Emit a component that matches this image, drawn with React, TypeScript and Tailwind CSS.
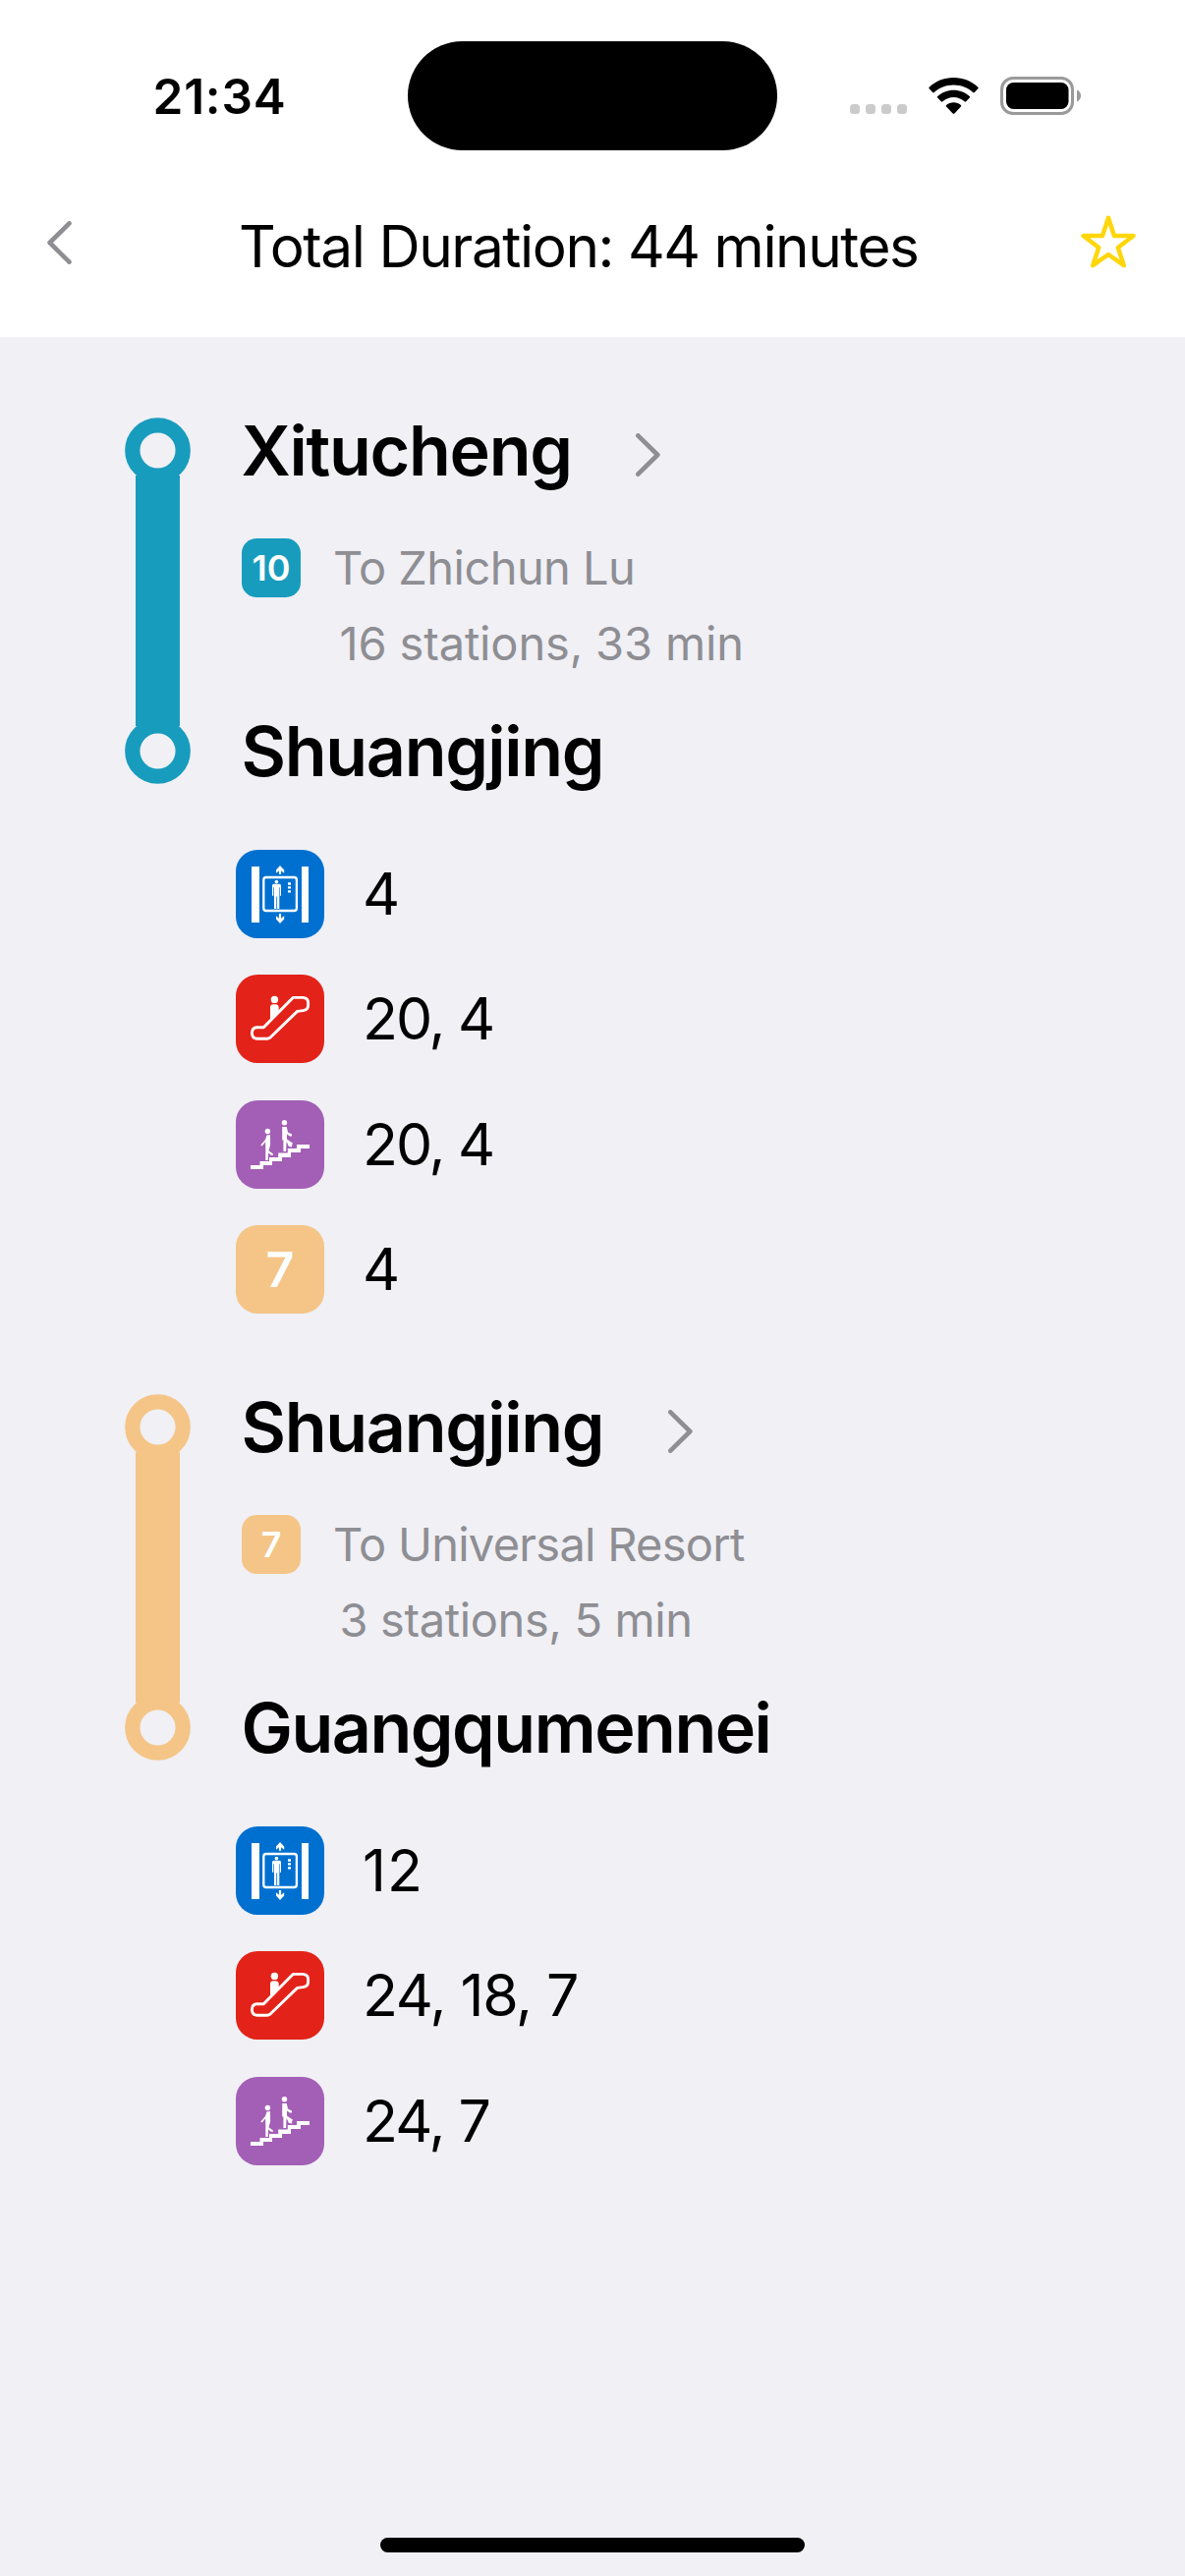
import type { ReactNode } from "react";

type Facility = { kind: "elevator" | "escalator" | "stairs" | "line"; exits: string; tracking: string };

type Leg = {
  line: string;
  from: string;
  fromTracking: string;
  to: string;
  toTracking: string;
  direction: string;
  directionTracking: string;
  summary: string;
  summaryTracking: string;
  text: string;
  bg: string;
  facilities: Facility[];
};

const legs: Leg[] = [
  {
    line: "10",
    from: "Xitucheng",
    fromTracking: "tracking-[-1.3px]",
    to: "Shuangjing",
    toTracking: "tracking-[-1.3px]",
    direction: "To Zhichun Lu",
    directionTracking: "tracking-[-0.57px]",
    summary: "16 stations, 33 min",
    summaryTracking: "tracking-[-0.15px]",
    text: "text-[#189CBE]",
    bg: "bg-[#189CBE]",
    facilities: [
      { kind: "elevator", exits: "4", tracking: "tracking-normal" },
      { kind: "escalator", exits: "20, 4", tracking: "tracking-[-2.07px]" },
      { kind: "stairs", exits: "20, 4", tracking: "tracking-[-2.07px]" },
      { kind: "line", exits: "4", tracking: "tracking-normal" },
    ],
  },
  {
    line: "7",
    from: "Shuangjing",
    fromTracking: "tracking-[-1.3px]",
    to: "Guangqumennei",
    toTracking: "tracking-[-1.5px]",
    direction: "To Universal Resort",
    directionTracking: "tracking-[-0.72px]",
    summary: "3 stations, 5 min",
    summaryTracking: "tracking-[-0.37px]",
    text: "text-[#F4C587]",
    bg: "bg-[#F4C587]",
    facilities: [
      { kind: "elevator", exits: "12", tracking: "tracking-[1px]" },
      { kind: "escalator", exits: "24, 18, 7", tracking: "tracking-[-1.32px]" },
      { kind: "stairs", exits: "24, 7", tracking: "tracking-[-1.8px]" },
    ],
  },
];

function ElevatorIcon() {
  return (
    <svg viewBox="0 0 90 90" className="size-[90px]" fill="#fff">
      <rect x="16" y="17" width="8" height="57" />
      <rect x="67" y="17" width="7" height="57" />
      <rect x="28.3" y="28" width="33.6" height="34" rx="2.6" fill="none" stroke="#fff" strokeWidth="2.3" />
      <path d="M45 16l4.2 4.4v3.4l-3.1-2.6V24.8h-2.2V21.2L41 23.8v-3.4z" />
      <path d="M45 75l4.2-4.4v-3.4l-3.1 2.6V65h-2.2v4.8L41 67.2v3.4z" />
      <circle cx="41.4" cy="32.6" r="1.8" />
      <path d="M38.6 34.8h5.8q1.6 0 1.6 1.7v10.3h-1.1v-8.6h-.6V60h-2.2V47.5h-.8V60H39V38.2h-.7v8.6H37V36.5q0-1.7 1.600-1.700z" />
      <path d="M53 33.300h3v2.400h-3zM53 37.200h3v2.400h-3zM53 41.200h3v2.400h-3z" />
    </svg>
  );
}

function EscalatorIcon() {
  return (
    <svg viewBox="0 0 90 90" className="size-[90px]" fill="#fff">
      <circle cx="39.4" cy="25.4" r="3.7" />
      <path d="M35 33.500q0-3.200 3.200-3.200h2.300q2.600 0 3.200 2.800v5.600L35 47.500z" />
      <path
        d="M58.200 23.400H68.500Q73.600 24 73.600 28.500V31Q73.600 36 68.500 36.600L62.600 37.400 34.800 64.200Q33.500 65.300 32 65.300H21.500Q16.400 64.800 16.400 59.500 16.400 54 21.500 53.700H28.300Z"
        fill="none"
        stroke="#fff"
        strokeWidth="2.9"
        strokeLinejoin="round"
      />
    </svg>
  );
}

function StairsIcon() {
  return (
    <svg viewBox="0 0 90 90" className="size-[90px]" fill="#fff">
      <path d="M15 66h9.500v-4h9.500v-4h9.200v-4.500h9.600V49h9.200v-4H75v4h-9v4h-10v5h-9v4H37v4h-9v4H15z" />
      <circle cx="32.400" cy="31.500" r="2.700" />
      <path d="M31.500 35.500L35 35l.1 10.500-1.600 5.700 4.400 3.300v1.300h-2L33 53.600l-.3 7.400h-2.400V50l-.1-7.700-3.500 4.200-1.400-1 4.700-5.600z" />
      <circle cx="49.500" cy="22.700" r="2.700" />
      <path d="M47.200 27h4.600l1.200 5.400 4 2v2.200h-2l-3-2v4.800l4.200 3 1.600.9-1.100 4.500-3.600-1.500.2-1.300-1.800-2.700-.4 9.700h-2.700V40.500h-1.200z" />
    </svg>
  );
}

function Tile({ className, children }: { className: string; children: ReactNode }) {
  return (
    <div
      className={
        "flex size-[90px] shrink-0 items-center justify-center rounded-[22px] text-[50px] font-semibold leading-[90px] text-white " +
        className
      }
    >
      {children}
    </div>
  );
}

function FacilityRow({ item }: { item: Facility }) {
  return (
    <li className="flex h-[90px] items-center">
      {item.kind === "elevator" && <Tile className="bg-[#0070D0]"><ElevatorIcon /></Tile>}
      {item.kind === "escalator" && <Tile className="bg-[#E32319]"><EscalatorIcon /></Tile>}
      {item.kind === "stairs" && <Tile className="bg-[#A35FB5]"><StairsIcon /></Tile>}
      {item.kind === "line" && <Tile className="bg-[#F4C587]">7</Tile>}
      <span className={"ml-[39px] whitespace-nowrap text-[59px] leading-[90px] text-black " + item.tracking}>{item.exits}</span>
    </li>
  );
}

function Marker() {
  return (
    <svg viewBox="0 0 67 67" className="size-[67px] shrink-0">
      <circle cx="33.5" cy="33.5" r="25.700" fill="none" stroke="currentColor" strokeWidth="15.300" />
    </svg>
  );
}

function Chevron({ className }: { className: string }) {
  return (
    <svg viewBox="0 0 25 44" className={"h-[44px] w-[25px] shrink-0 text-[#8E8E93] " + className}>
      <path d="M2.300 2.300L22.300 22L2.300 41.700" fill="none" stroke="currentColor" strokeWidth="4.600" strokeLinecap="round" strokeLinejoin="round" />
    </svg>
  );
}

function LegCard({ leg }: { leg: Leg }) {
  return (
    <section>
      <div className="flex">
        <div className={"flex h-[373px] w-[67px] flex-col items-center " + leg.text}>
          <Marker />
          <div className={"-my-[8px] w-[45px] flex-1 " + leg.bg} />
          <Marker />
        </div>
        <div className="ml-[51.500px] flex flex-col">
          <div className="flex h-[67px] items-center">
            <h2 className={"whitespace-nowrap text-[70px] font-semibold leading-[67px] text-black " + leg.fromTracking}>{leg.from}</h2>
            <Chevron className="ml-[65.500px] mt-[9px]" />
          </div>
          <div className="ml-[0.500px] mt-[56px] flex h-[60px] items-center">
            <div className={"flex size-[60px] items-center justify-center rounded-[15px] text-[36px] font-semibold leading-[60px] text-white " + leg.bg}>
              {leg.line}
            </div>
            <span className={"ml-[33px] whitespace-nowrap text-[47px] leading-[60px] text-[#8E8E93] " + leg.directionTracking}>{leg.direction}</span>
          </div>
          <p className={"ml-[100px] mt-[16px] h-[62px] whitespace-nowrap text-[47px] leading-[62px] text-[#8E8E93] " + leg.summaryTracking}>{leg.summary}</p>
          <h2 className={"mt-[45px] h-[67px] whitespace-nowrap text-[70px] font-semibold leading-[67px] text-black " + leg.toTracking}>{leg.to}</h2>
        </div>
      </div>
      <ul className="ml-[113px] mt-[67px] flex flex-col gap-[37.4px]">
        {leg.facilities.map((f) => (
          <FacilityRow key={f.kind} item={f} />
        ))}
      </ul>
    </section>
  );
}

function StatusBar() {
  return (
    <div className="flex h-[153px] items-start">
      <div className="ml-[155.500px] mt-[73px] w-[259.500px] text-[49.500px] font-semibold leading-[50px] tracking-[0.8px] text-black">21:34</div>
      <div className="mt-[41.500px] h-[111px] w-[376px] rounded-full bg-black" />
      <div className="ml-[74px] mt-[106px] flex gap-[6px]">
        {[0, 1, 2, 3].map((i) => (
          <span key={i} className="h-[10px] w-[10px] rounded-[3.500px] bg-[#CBCBCB]" />
        ))}
      </div>
      <svg viewBox="0 0 51 37" className="ml-[22px] mt-[79px] h-[37px] w-[51px]" fill="#000">
        <path d="M25.500 0C35.300 0 44 3.700 50.300 9.700q.8.800 0 1.600l-3.500 3.600q-.8.800-1.600.1C40 10.200 33 7.500 25.500 7.500S11 10.200 5.800 15q-.8.700-1.600-.1L.7 11.300q-.8-.8 0-1.600C7 3.700 15.700 0 25.500 0z" />
        <path d="M25.500 12.700c6.300 0 12 2.400 16.300 6.300q.8.800 0 1.600l-3.600 3.600q-.8.800-1.600.1c-3-2.600-6.900-4.200-11.100-4.200s-8.100 1.600-11.100 4.200q-.8.700-1.600-.1l-3.600-3.600q-.8-.8 0-1.600c4.300-3.900 10-6.300 16.300-6.300z" />
        <path d="M25.500 25.300c2.800 0 5.400 1 7.400 2.700q.8.800 0 1.600l-6.500 6.800q-.9.800-1.800 0l-6.500-6.800q-.8-.8 0-1.600c2-1.700 4.600-2.700 7.400-2.700z" />
      </svg>
      <svg viewBox="0 0 82 39" className="ml-[22px] mt-[78px] h-[39px] w-[82px]">
        <rect x="1.500" y="1.500" width="72" height="36" rx="11.500" fill="none" stroke="#9A9A9A" strokeWidth="3" />
        <rect x="6" y="6" width="63.500" height="27" rx="7.500" fill="#000" />
        <path d="M78 13.500q4 1.800 4 6t-4 6z" fill="#9A9A9A" />
      </svg>
    </div>
  );
}

export default function App() {
  return (
    <div className="flex h-[2622px] w-[1206px] flex-col overflow-hidden bg-[#F0F0F5] font-['Inter',sans-serif]">
      <header className="h-[343px] shrink-0 bg-white">
        <StatusBar />
        <div className="flex h-[190px] items-start">
          <svg viewBox="0 0 25 44" className="ml-[47.500px] mt-[71.500px] h-[44px] w-[25px] shrink-0">
            <path d="M22.500 2.300L2.600 22L22.500 41.700" fill="none" stroke="#8E8E93" strokeWidth="4.600" strokeLinecap="round" strokeLinejoin="round" />
          </svg>
          <h1 className="ml-[170.500px] mt-[58px] w-[856px] whitespace-nowrap text-[58.500px] leading-[80px] tracking-[-1.450px] text-black">
            Total Duration: 44 minutes
          </h1>
          <svg viewBox="0 0 57 54" className="mt-[66px] h-[54px] w-[57px] shrink-0">
            <path
              d="M29 2.700L35 21L54.500 21L38.800 33L44.800 51.200L29 40L13.200 51.200L19.200 33L3.500 21L23 21Z"
              fill="none"
              stroke="#FFD60A"
              strokeWidth="4.500"
              strokeLinejoin="round"
            />
          </svg>
        </div>
      </header>
      <main className="flex flex-1 flex-col gap-[81.800px] pl-[127px] pt-[82px]">
        {legs.map((leg) => (
          <LegCard key={leg.line} leg={leg} />
        ))}
      </main>
      <footer className="flex h-[39px] shrink-0 justify-center">
        <div className="h-[15px] w-[432px] rounded-full bg-black" />
      </footer>
    </div>
  );
}
